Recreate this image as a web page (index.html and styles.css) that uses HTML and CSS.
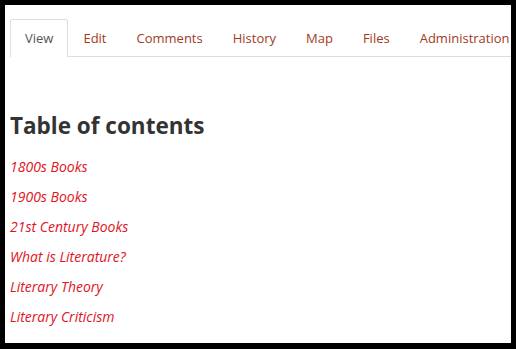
FILE: index.html
```html
<!DOCTYPE html>
<html lang="en">
<head>
    <meta charset="UTF-8">
    <title>Table of contents</title>
    <link rel="stylesheet" href="styles.css">
</head>
<body>
    <div class="page">
        <!-- Tabs -->
        <ul class="tabs">
            <li><a href="#" class="tab active">View</a></li>
            <li><a href="#" class="tab">Edit</a></li>
            <li><a href="#" class="tab">Comments</a></li>
            <li><a href="#" class="tab">History</a></li>
            <li><a href="#" class="tab">Map</a></li>
            <li><a href="#" class="tab">Files</a></li>
            <li><a href="#" class="tab">Administration</a></li>
        </ul>

        <!-- Content -->
        <div class="content">
            <h1>Table of contents</h1>
            <ul class="toc">
                <li><a href="#">1800s Books</a></li>
                <li><a href="#">1900s Books</a></li>
                <li><a href="#">21st Century Books</a></li>
                <li><a href="#">What is Literature?</a></li>
                <li><a href="#">Literary Theory</a></li>
                <li><a href="#">Literary Criticism</a></li>
            </ul>
        </div>
    </div>
</body>
</html>
```

FILE: styles.css
```css
/* General Styling */
html, body {
    height: 100%;
}

body {
    margin: 0;
    background-color: #000;
    font-family: 'Open Sans', 'DejaVu Sans', sans-serif;
    box-sizing: border-box;
    padding: 5px 5px 6px 5px;
}

.page {
    background-color: #fff;
    height: 100%;
    overflow: hidden;
    padding: 14px 0 0 5px;
    box-sizing: border-box;
}

/* Tabs */
.tabs {
    list-style: none;
    margin: 0;
    padding: 0;
    display: flex;
    border-bottom: 1px solid #ddd;
    white-space: nowrap;
}

.tab {
    display: block;
    padding: 0 14px;
    height: 36px;
    line-height: 36px;
    font-size: 13px;
    color: #a23a1e;
    text-decoration: none;
    border: 1px solid transparent;
    border-bottom: none;
    border-radius: 3px 3px 0 0;
    margin-bottom: -1px;
}

.tab.active {
    color: #555;
    border-color: #ddd;
    background-color: #fff;
    height: 37px;
}

/* Content */
.content h1 {
    margin: 54px 0 0 0;
    font-size: 22.5px;
    font-weight: bold;
    color: #333;
    line-height: 30px;
}

.toc {
    list-style: none;
    margin: 10px 0 0 0;
    padding: 0;
}

.toc li {
    height: 30px;
    line-height: 30px;
}

.toc a {
    color: #e0141e;
    font-style: italic;
    font-size: 14px;
    text-decoration: none;
}
```
